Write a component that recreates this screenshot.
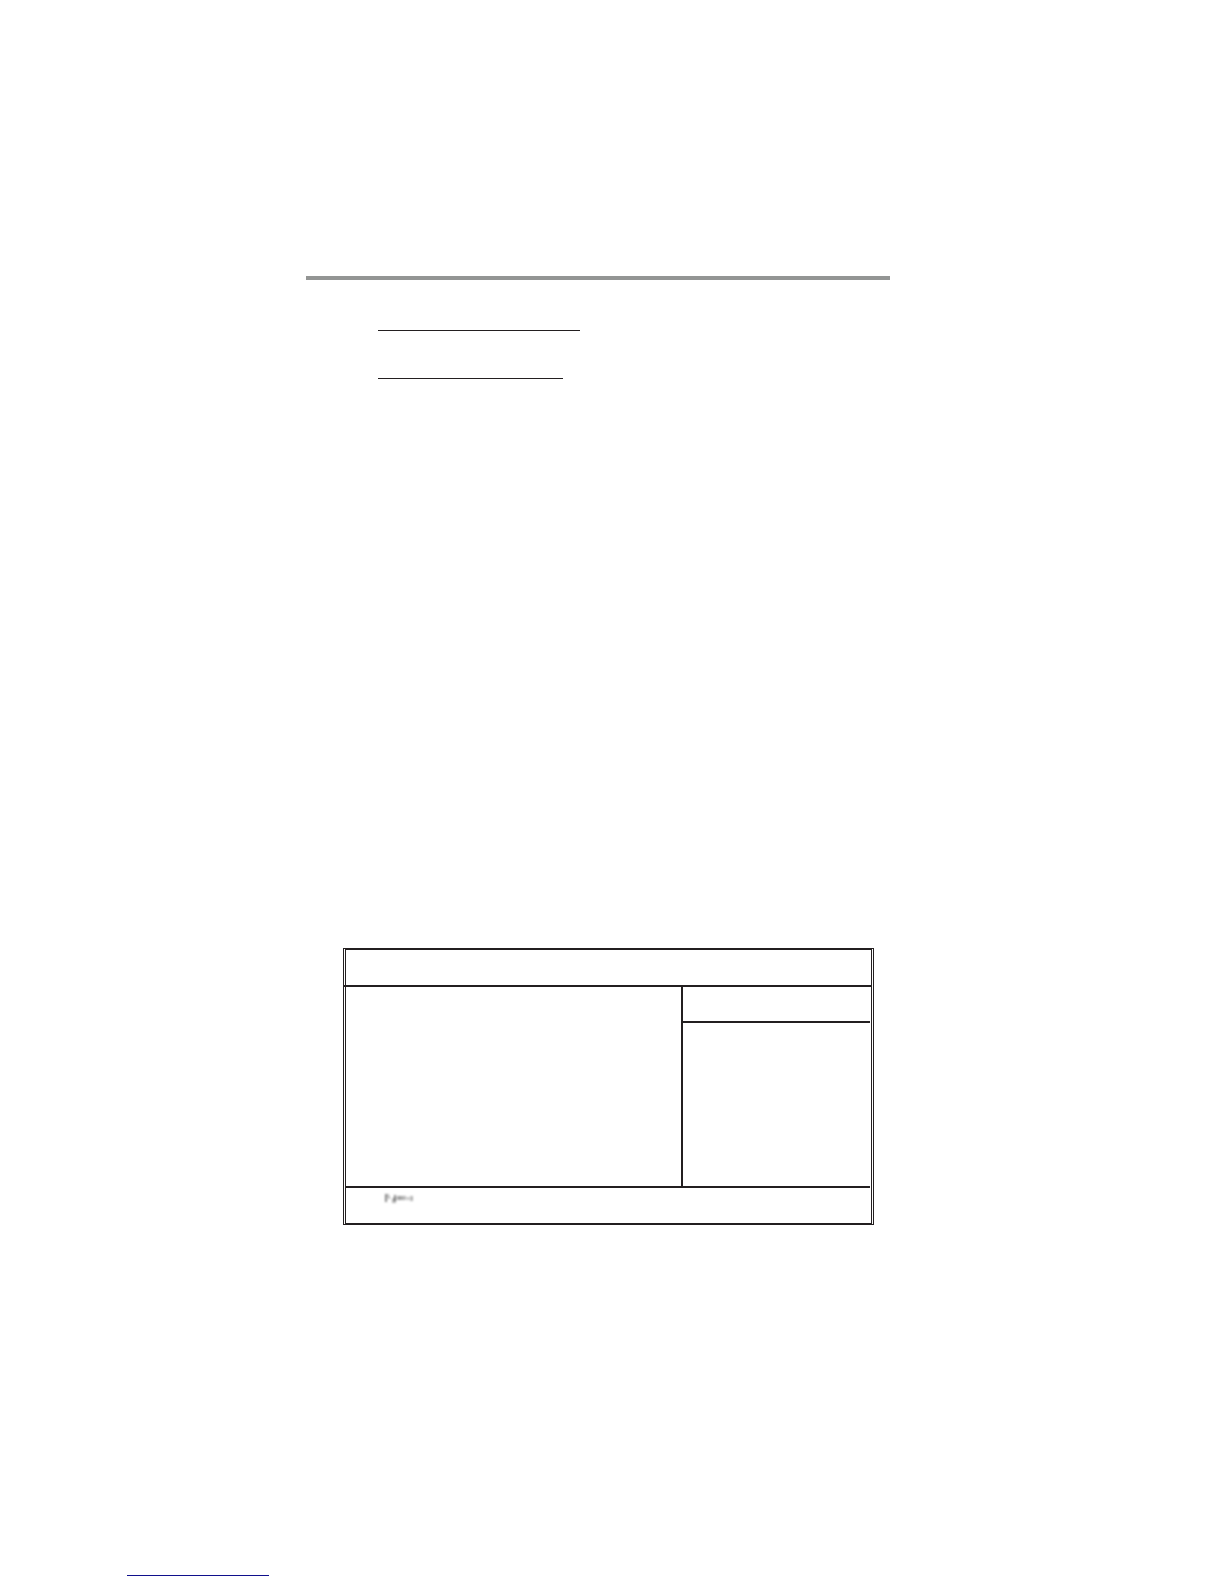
<main class="sheet">
  <hr class="header-rule" />
  <section class="entries">
    <div class="underline long"></div>
    <div class="underline"></div>
  </section>
  <section class="panel">
    <div class="inner">
      <header class="title"></header>
      <div class="body">
        <div class="menu"></div>
        <aside class="help"><div class="help-title"></div></aside>
      </div>
      <footer class="keys">
        <svg class="smudge" viewBox="0 0 32 12" aria-hidden="true">
          <g fill="#444">
            <path opacity=".65" d="M1 1h2v8H1z" />
            <path opacity=".4" d="M3 1h2v2h1v3H4z" />
            <path opacity=".4" d="M8 5h4v5H8z" />
            <path opacity=".65" d="M10 2h2v6h-2z" />
            <path opacity=".5" d="M13 3h5v4h-5z" />
            <path opacity=".4" d="M18 3h4v4h-4zM23 4h2v3h-2zM26 3h3v5h-3z" />
          </g>
        </svg>
      </footer>
    </div>
  </section>
  <footer class="link-line"></footer>
</main>

<style>
  :global(body) {
    margin: 0;
    background: #fff;
    font-family: "Liberation Sans", sans-serif;
  }
  .sheet {
    box-sizing: border-box;
    min-height: 100vh;
    padding: 276px 334px 8px 306px;
    display: flex;
    flex-direction: column;
  }
  .header-rule {
    width: 100%;
    height: 4px;
    margin: 0;
    border: 0;
    background: #939594;
  }
  .entries {
    display: flex;
    flex-direction: column;
    gap: 47px;
    padding: 50px 0 0 72px;
  }
  .underline {
    width: 185px;
    height: 1px;
    background: #231f20;
  }
  .long {
    width: 202px;
  }
  .panel {
    margin: 569px 16px 0 37px;
    border: 1px solid #231f20;
    border-width: 0 1px;
    padding: 0 1px;
    background:
      linear-gradient(#231f20, #231f20) top / 100% 1px no-repeat,
      linear-gradient(#231f20, #231f20) bottom / 100% 1px no-repeat,
      linear-gradient(#231f20, #231f20) 0 37px / 2px 2px no-repeat;
  }
  .inner {
    border: 1px solid #231f20;
    border-width: 2px 1px;
  }
  .title {
    height: 35px;
    border-bottom: 2px solid #231f20;
  }
  .body {
    display: grid;
    grid-template-columns: 1fr 189px;
    height: 199px;
    margin-right: 1px;
    border-bottom: 2px solid #231f20;
  }
  .help {
    border-left: 2px solid #231f20;
  }
  .help-title {
    height: 34px;
    border-bottom: 2px solid #231f20;
  }
  .keys {
    height: 35px;
    box-sizing: border-box;
    padding: 5px 0 0 38px;
  }
  .smudge {
    display: block;
    width: 32px;
    height: 12px;
    filter: blur(1px);
  }
  .link-line {
    width: 142px;
    height: 1px;
    margin: auto 0 0 -179px;
    background: #10108c;
  }
</style>
